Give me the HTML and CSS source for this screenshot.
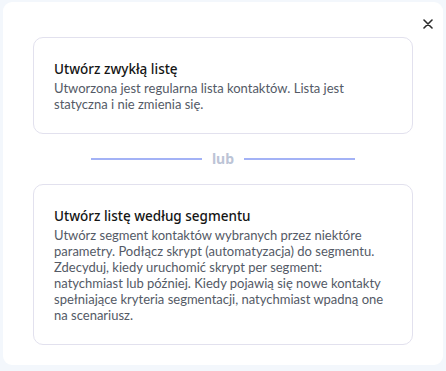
FILE: index.html
```html
<!DOCTYPE html>
<html lang="pl">
  <head>
    <meta charset="UTF-8" />
    <meta name="viewport" content="width=device-width, initial-scale=1.0" />
    <title>Nowa lista</title>
    <link rel="stylesheet" href="styles.css">
  </head>
  <body>
    <div class="modal">
      <button class="modal__close" aria-label="Zamknij">
        <svg width="10" height="10" viewBox="0 0 10 10">
          <path d="M1 1L9 9M9 1L1 9" stroke="#2b2b2b" stroke-width="1.6" stroke-linecap="round" />
        </svg>
      </button>
      <div class="option">
        <h3 class="option__title">Utwórz zwykłą listę</h3>
        <p class="option__text">
          Utworzona jest regularna lista kontaktów. Lista jest statyczna i nie
          zmienia się.
        </p>
      </div>
      <div class="divider">
        <span class="divider__line"></span>
        <span class="divider__label">lub</span>
        <span class="divider__line"></span>
      </div>
      <div class="option">
        <h3 class="option__title">Utwórz listę według segmentu</h3>
        <p class="option__text">
          Utwórz segment kontaktów wybranych przez niektóre parametry. Podłącz
          skrypt (automatyzacja) do segmentu. Zdecyduj, kiedy uruchomić skrypt
          per segment: natychmiast lub później. Kiedy pojawią się nowe kontakty
          spełniające kryteria segmentacji, natychmiast wpadną one na
          scenariusz.
        </p>
      </div>
    </div>
  </body>
</html>
```

FILE: styles.css
```css
* {
  margin: 0;
  padding: 0;
  box-sizing: border-box;
}

body {
  background-color: #f3f7fc;
  font-family: "Lato", sans-serif;
  padding: 2px 3px;
}

.modal {
  position: relative;
  background-color: #fff;
  border-radius: 9px;
  padding: 35px 30px 20px;
}

.modal__close {
  position: absolute;
  top: 17px;
  right: 10px;
  width: 10px;
  height: 10px;
  border: none;
  background: none;
  display: flex;
}

.option {
  border: 1px solid #e2e1ee;
  border-radius: 10px;
  padding: 22px 20px 21px;
}

.option__title {
  font-family: "Noto Sans", sans-serif;
  font-size: 13.5px;
  font-weight: 500;
  line-height: 18px;
  color: #151515;
  margin-bottom: 2px;
}

.option__text {
  font-size: 13px;
  line-height: 16px;
  color: #545a66;
}

.divider {
  display: flex;
  align-items: center;
  justify-content: center;
  gap: 10px;
  height: 50px;
}

.divider__line {
  width: 111px;
  height: 2px;
  background-color: #a3b2f6;
}

.divider__label {
  font-family: "Noto Sans", sans-serif;
  font-weight: 700;
  font-size: 14px;
  color: #bcc4d6;
  line-height: 1;
}
```
